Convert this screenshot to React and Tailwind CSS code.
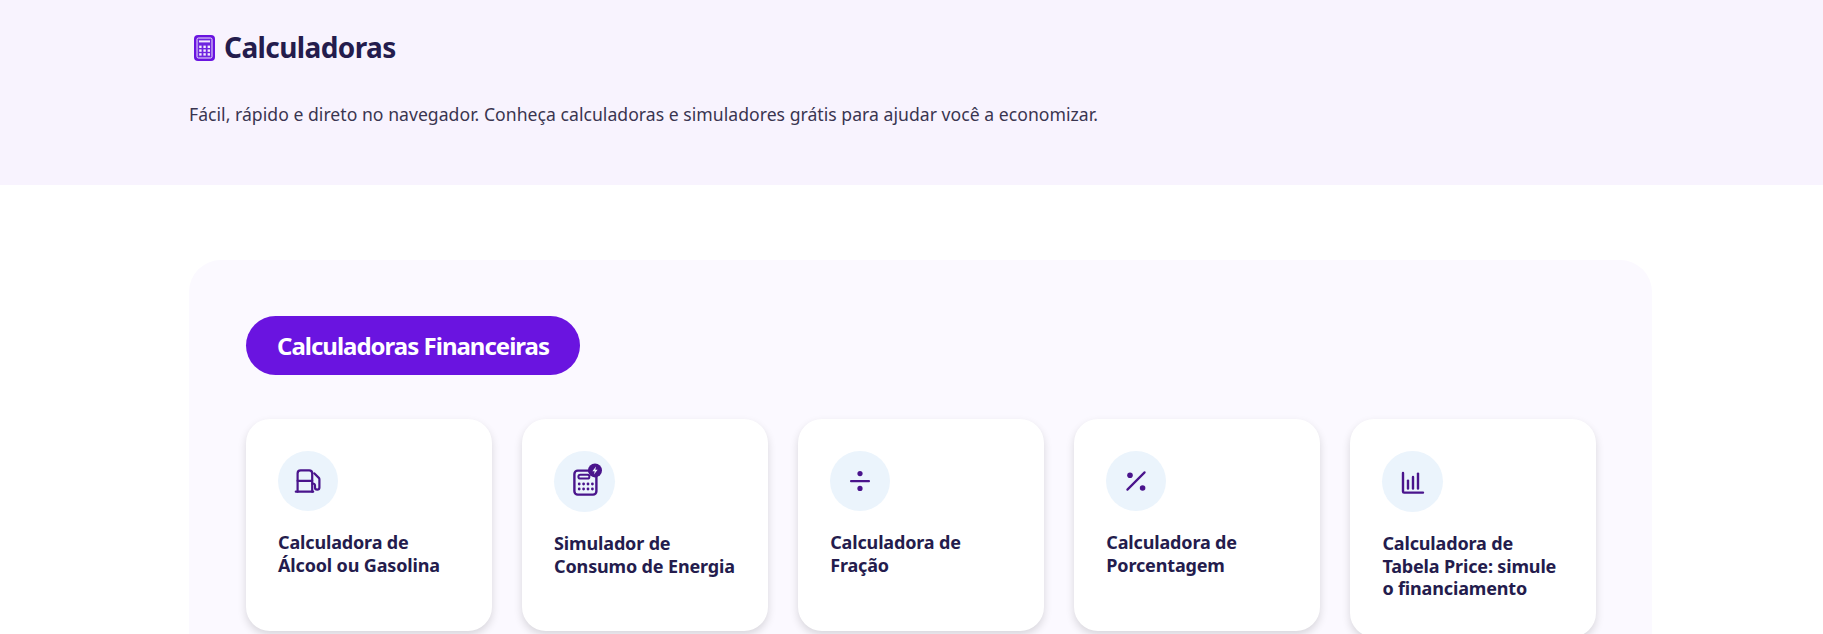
import React from 'react';

const FuelIcon = () => (
  <svg width="32" height="32" viewBox="0 0 32 32" fill="none" stroke="#4a148c" strokeWidth="2.2" strokeLinecap="round" strokeLinejoin="round">
    <path d="M3.8 26.7h17.4" />
    <path d="M5.6 26.7V8.4a3 3 0 0 1 3-3h8.6a3 3 0 0 1 3 3v18.3" />
    <path d="M5.6 15.8h14.6" />
    <path d="M22.2 8.3l4.6 4.6a2 2 0 0 1 .6 1.5v8a2.2 2.2 0 0 1-4.4 0v-2a1.8 1.8 0 0 0-2.6-1.6" />
  </svg>
);

const EnergyIcon = () => (
  <svg width="32" height="32" viewBox="0 0 32 32" fill="none" className="overflow-visible">
    <rect x="5.4" y="4.6" width="22" height="24" rx="3.4" stroke="#4a148c" strokeWidth="2.4" />
    <rect x="9.4" y="8.8" width="11" height="3.8" rx="1.9" stroke="#4a148c" strokeWidth="2" />
    {[18, 23].map((y) =>
      [10.2, 14.6, 19, 23.4].map((x) => <circle key={`${x}-${y}`} cx={x} cy={y} r="1.4" fill="#4a148c" />)
    )}
    <circle cx="26" cy="4.4" r="7" fill="#4a148c" />
    <path d="M27 0.4l-3.6 4.8h2.3l-.7 3.4 3.6-4.8h-2.3z" fill="#ebf4fc" />
  </svg>
);

const DivideIcon = () => (
  <svg width="32" height="32" viewBox="0 0 32 32" fill="#4a148c">
    <rect x="6" y="15" width="20" height="2.2" rx="1" />
    <circle cx="16" cy="8.6" r="2.6" />
    <circle cx="16" cy="23.4" r="2.6" />
  </svg>
);

const PercentIcon = () => (
  <svg width="32" height="32" viewBox="0 0 32 32" fill="#4a148c">
    <path d="M7.4 24.6L24.6 7.4" stroke="#4a148c" strokeWidth="2.2" strokeLinecap="round" />
    <circle cx="10" cy="10.3" r="2.8" />
    <circle cx="22.6" cy="23" r="2.8" />
  </svg>
);

const ChartIcon = () => (
  <svg width="32" height="32" viewBox="0 0 32 32" fill="none" stroke="#4a148c" strokeWidth="2.4" strokeLinecap="round" strokeLinejoin="round">
    <path d="M6 7v18.6a1 1 0 0 0 1 1h19" />
    <path d="M11 22.6v-8" />
    <path d="M16 22.6V11" />
    <path d="M21 22.6V7.6" />
  </svg>
);

const HeaderIcon = () => (
  <svg width="21" height="26" viewBox="0 0 21 26" className="shrink-0 mt-[2px]">
    <rect width="21" height="26" rx="4" fill="#6a14e0" />
    <rect x="3" y="3" width="15" height="20" rx="1.4" fill="#6f25e0" stroke="#efe6fb" strokeWidth="1" />
    <rect x="5" y="5.4" width="11" height="2" fill="#f4ecfe" />
    {[10.6, 14.4, 18.2].map((y) =>
      [5.2, 9.4, 13.6].map((x) => <rect key={`${x}-${y}`} x={x} y={y} width="2.4" height="2.4" fill="#f4ecfe" />)
    )}
  </svg>
);

const cards = [
  { title: ['Calculadora de', 'Álcool ou Gasolina'], icon: <FuelIcon /> },
  { title: ['Simulador de', 'Consumo de Energia'], icon: <EnergyIcon />, big: true },
  { title: ['Calculadora de', 'Fração'], icon: <DivideIcon /> },
  { title: ['Calculadora de', 'Porcentagem'], icon: <PercentIcon /> },
  { title: ['Calculadora de', 'Tabela Price: simule', 'o financiamento'], icon: <ChartIcon />, big: true },
];

const App = () => {
  return (
    <div className="h-[634px] overflow-hidden bg-white font-['Noto_Sans',sans-serif]">
      {/* Topo */}
      <div className="h-[185px] bg-[#f8f3fe] pl-[189px] pt-[30px]">
        <div className="flex items-center gap-[9px] pl-[5px] h-[34px]">
          <HeaderIcon />
          <h1 className="text-[28px] leading-[34px] font-bold text-[#241c4d] tracking-[-0.6px]">Calculadoras</h1>
        </div>
        <p className="mt-[36px] text-[17.6px] leading-[28px] text-[#3a3550] tracking-[0.03px]">
          Fácil, rápido e direto no navegador. Conheça calculadoras e simuladores grátis para ajudar você a economizar.
        </p>
      </div>

      {/* Painel */}
      <div className="ml-[189px] mt-[75px] w-[1463px] rounded-[32px] bg-[#fbf9ff] pl-[57px] pr-[55.5px] pt-[56px] pb-[40px]">
        <div className="inline-flex h-[59px] items-center rounded-full bg-[#6a14e0] px-[31px] text-[24px] font-bold text-white tracking-[-1px]">
          Calculadoras Financeiras
        </div>

        <div className="mt-[44px] flex items-start gap-[30px]">
          {cards.map((card) => (
            <div key={card.title.join(' ')} className="flex-1 min-h-[212px] rounded-[24px] bg-white pt-[32px] px-[32px] pb-[37px] shadow-[0_4px_8px_rgba(0,0,0,0.14)]">
              <div className={`flex items-center justify-center rounded-full bg-[#ebf4fc] ${card.big ? 'h-[61px] w-[61px]' : 'h-[60px] w-[60px]'}`}>
                {card.icon}
              </div>
              <h3 className="mt-[20px] text-[18px] leading-[22.5px] font-bold text-[#241c4d] tracking-[-0.15px]">
                {card.title.map((line) => (
                  <span key={line} className="block whitespace-nowrap">{line}</span>
                ))}
              </h3>
            </div>
          ))}
        </div>
      </div>
    </div>
  );
};

export default App;
